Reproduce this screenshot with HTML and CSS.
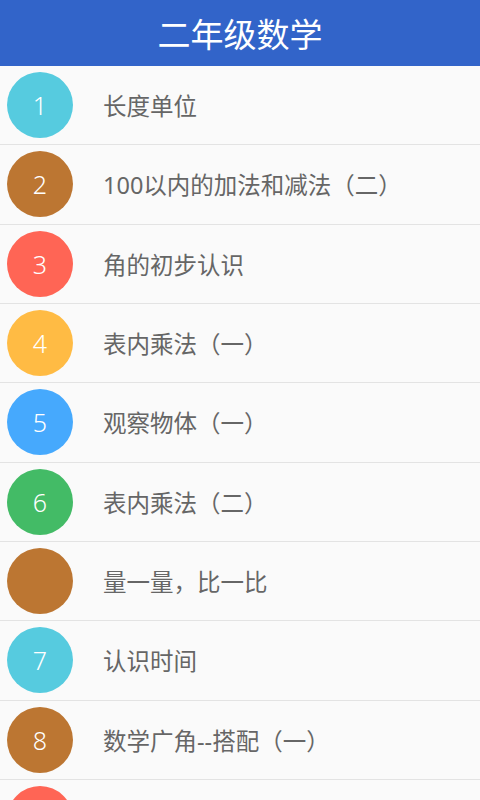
FILE: index.html
```html
<!DOCTYPE html>
<html lang="zh-CN">
<head>
    <meta charset="UTF-8">
    <meta name="viewport" content="width=device-width, initial-scale=1.0">
    <title>二年级数学</title>
    <link rel="stylesheet" href="styles.css">
</head>
<body>

    <header class="top-bar">
        <h1>二年级数学</h1>
    </header>

    <ul class="unit-list">
        <li class="unit"><span class="badge cyan">1</span><span class="unit-name">长度单位</span></li>
        <li class="unit"><span class="badge brown">2</span><span class="unit-name">100以内的加法和减法（二）</span></li>
        <li class="unit"><span class="badge red">3</span><span class="unit-name">角的初步认识</span></li>
        <li class="unit"><span class="badge yellow">4</span><span class="unit-name">表内乘法（一）</span></li>
        <li class="unit"><span class="badge blue">5</span><span class="unit-name">观察物体（一）</span></li>
        <li class="unit"><span class="badge green">6</span><span class="unit-name">表内乘法（二）</span></li>
        <li class="unit"><span class="badge brown"></span><span class="unit-name">量一量，比一比</span></li>
        <li class="unit"><span class="badge cyan">7</span><span class="unit-name">认识时间</span></li>
        <li class="unit"><span class="badge brown">8</span><span class="unit-name">数学广角--搭配（一）</span></li>
        <li class="unit"><span class="badge red"></span></li>
    </ul>

</body>
</html>
```

FILE: styles.css
```css
* {
    margin: 0;
    padding: 0;
    box-sizing: border-box;
    font-family: "Noto Sans", "Noto Sans CJK SC", sans-serif;
}

body {
    background: #fafafa;
    width: 480px;
    height: 800px;
    overflow: hidden;
    text-spacing-trim: space-all;
}

.top-bar {
    height: 66px;
    background: #3264c9;
    color: white;
    display: flex;
    align-items: center;
    justify-content: center;
}

.top-bar h1 {
    font-size: 33px;
    font-weight: normal;
}

.unit-list {
    list-style: none;
}

.unit {
    height: 79.33px;
    border-bottom: 1px solid #e3e3e3;
    display: flex;
    align-items: center;
    padding-left: 7px;
}

.badge {
    width: 66px;
    height: 66px;
    border-radius: 50%;
    flex-shrink: 0;
    display: flex;
    align-items: center;
    justify-content: center;
    color: white;
    font-size: 25px;
    font-weight: 300;
    margin-right: 30px;
}

.unit-name {
    color: #666;
    font-size: 23.5px;
}

.cyan { background: #56cbdf; }
.brown { background: #bc7632; }
.red { background: #ff6555; }
.yellow { background: #ffbb44; }
.blue { background: #46a9fd; }
.green { background: #43bb66; }
```
